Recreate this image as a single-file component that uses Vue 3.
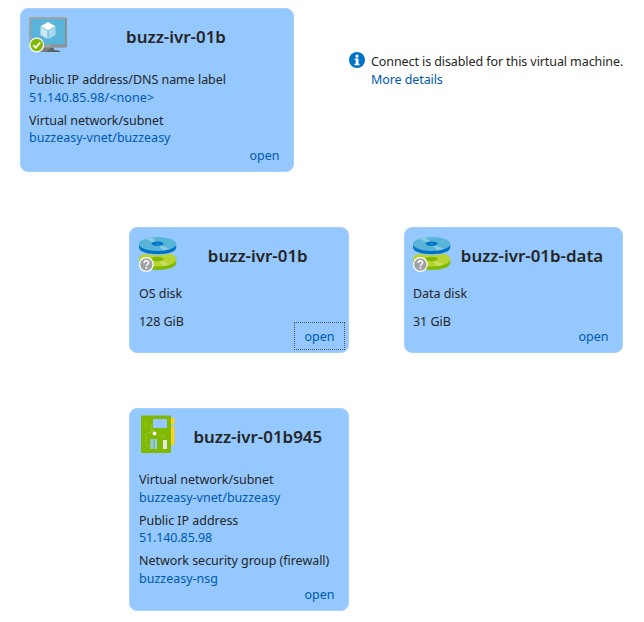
<script setup>
const cards = [
  {
    id: 'vm', icon: 'vm', title: 'buzz-ivr-01b',
    fields: [
      { label: 'Public IP address/DNS name label', value: '51.140.85.98/<none>', wide: true },
      { label: 'Virtual network/subnet', value: 'buzzeasy-vnet/buzzeasy' },
    ],
  },
  { id: 'os', icon: 'disk', title: 'buzz-ivr-01b', fields: [{ label: 'OS disk' }, { label: '128 GiB' }], focused: true },
  { id: 'data', icon: 'disk', title: 'buzz-ivr-01b-data', fields: [{ label: 'Data disk' }, { label: '31 GiB' }] },
  {
    id: 'nic', icon: 'nic', title: 'buzz-ivr-01b945',
    fields: [
      { label: 'Virtual network/subnet', value: 'buzzeasy-vnet/buzzeasy' },
      { label: 'Public IP address', value: '51.140.85.98', narrow: true },
      { label: 'Network security group (firewall)', value: 'buzzeasy-nsg' },
    ],
  },
]
</script>

<template>
  <main class="map">
    <template v-for="c in cards" :key="c.id">
      <section class="card" :class="[c.id, c.icon + '-card']">
        <header>
          <svg v-if="c.icon === 'vm'" class="icon" viewBox="0 0 38 38">
            <path d="M14 30h10l1 4 6 1v1H8v-1l5-1z" fill="#7a7a7a" />
            <path d="M24 31l1 3 6 1v1H17z" fill="#5d6063" />
            <rect width="38" height="30.500" y="1" rx="1.500" fill="#a0a1a2" />
            <path d="M38 2v28a1.500 1.500 0 0 1-1.500 1.500H20L36 3z" fill="#8f9193" />
            <rect x="2" y="3" width="34" height="25.500" fill="#59b4d9" />
            <path d="M19 6l7.500 4.200-7.500 4.200-7.500-4.200z" fill="#fff" />
            <path d="M11.500 11v8l7 4v-8z" fill="#cde8f3" />
            <path d="M26.500 11v8l-7 4v-8z" fill="#a9d8ec" />
            <circle cx="7.700" cy="29" r="7.500" fill="#fff" />
            <circle cx="7.700" cy="29" r="6.200" fill="#7fba00" />
            <path d="M4.300 29.200l2.500 2.500 4.400-5.200" fill="none" stroke="#fff" stroke-width="1.900" />
          </svg>
          <svg v-else-if="c.icon === 'disk'" class="icon" viewBox="0 0 38 38">
            <path d="M0 22v4c0 4 8 7 18.700 7s18.500-3 18.500-7v-4z" fill="#7fba00" />
            <ellipse cx="18.600" cy="22" rx="18.600" ry="7.600" fill="#b8d432" />
            <path d="M18.600 22l5.400 7.200 7-1.700z" fill="#d6e685" opacity=".6" />
            <ellipse cx="18.600" cy="22" rx="6" ry="2.300" fill="#7fba00" />
            <path d="M0 8v3.500c0 4 8 6.700 18.700 6.700s18.500-2.700 18.500-6.700V8z" fill="#94c8fe" />
            <path d="M0 7v3.500c0 4 8 6.700 18.700 6.700s18.500-2.700 18.500-6.700V7z" fill="#0072c6" />
            <ellipse cx="18.600" cy="7" rx="18.600" ry="6.900" fill="#59b4d9" />
            <path d="M18.600 7L6 2l7-1.600zM18.600 7l5.400 6.600 7-1.600z" fill="#a7d7ed" opacity=".65" />
            <ellipse cx="18.600" cy="6.800" rx="6" ry="2.200" fill="#0072c6" />
            <ellipse cx="18.600" cy="7" rx="2" ry=".7" fill="#3999d0" />
            <circle cx="7.300" cy="27.500" r="7.500" fill="#fff" />
            <circle cx="7.300" cy="27.500" r="6.200" fill="#a0a1a2" />
            <path d="M5.100 26c0-3 4.600-2.900 4.500-.3-.1 1.500-2.200 1.600-2.200 3.400" fill="none" stroke="#fff" stroke-width="1.500" />
            <rect x="6.600" y="30" width="1.600" height="1.600" fill="#fff" />
          </svg>
          <svg v-else class="icon" viewBox="0 0 38 38">
            <path d="M31 3h4.500v6.500H31zM31 11.500h4.500V30H31z" fill="#fcd116" />
            <rect x="2" y=".500" width="30" height="37.500" fill="#7fba00" />
            <path d="M12 9v9H7v13h4M7 7v7M14 13v4M20 20h5v4" fill="none" stroke="#99c733" />
            <rect x="14" y="4" width="14" height="9" fill="#94c8fe" />
            <circle cx="15.500" cy="18.500" r="1.900" fill="#fff" />
            <path d="M11.500 24h3v10h-3zM15.500 24h2.500v10h-2.500z" fill="#94c8fe" />
            <rect x="24" y="25" width="4" height="9" fill="#e6e6e6" />
          </svg>
          <h2>{{ c.title }}</h2>
        </header>
        <div class="body">
          <div class="fields">
            <div v-for="f in c.fields" :key="f.label" class="field">
              <div class="line label">{{ f.label }}</div>
              <div v-if="f.value" class="line value"><a :class="{ wide: f.wide, narrow: f.narrow }">{{ f.value }}</a></div>
            </div>
          </div>
          <a class="open" :class="{ focused: c.focused }">open</a>
        </div>
      </section>
      <aside v-if="c.id === 'vm'" class="notice">
        <svg class="info" viewBox="0 0 16 16">
          <circle cx="8" cy="8" r="8" fill="#0072c6" />
          <circle cx="8" cy="4.100" r="1.600" fill="#fff" />
          <path d="M5.700 6.600h3.800v5.200h1V13.200H5.500v-1.400h1.200V8h-1z" fill="#fff" />
        </svg>
        <div class="message">
          <div class="line">Connect is disabled for this virtual machine.</div>
          <div class="line"><a>More details</a></div>
        </div>
      </aside>
    </template>
  </main>
</template>

<style>
body {
  background: #fff;
}
</style>

<style scoped>
.map {
  box-sizing: border-box;
  width: 644px;
  height: 622px;
  padding: 8px 0 0 20px;
  display: grid;
  grid-template-columns: 109px 165px 55px 55px 219px;
  grid-template-rows: 164px 126px 203px;
  row-gap: 55px;
  font: 12.5px/18px "Noto Sans", "Open Sans", sans-serif;
  color: #252525;
}
.card {
  box-sizing: border-box;
  display: flex;
  flex-direction: column;
  background: #94c8fe;
  border: 1px solid #a5d0fc;
  border-radius: 8px;
}
.vm { grid-area: 1 / 1 / 2 / 3; }
.os { grid-area: 2 / 2 / 3 / 4; width: 220px; }
.data { grid-area: 2 / 5; }
.nic { grid-area: 3 / 2 / 4 / 4; width: 220px; }
header {
  display: flex;
  flex: none;
  height: 62px;
  padding: 0 8px;
}
.os header, .nic header { padding: 0 8px 0 9px; }
.disk-card header { height: 57px; }
.icon {
  flex: none;
  width: 38px;
  height: 38px;
  margin-top: 7px;
}
.disk-card .icon { margin-top: 9px; }
.nic-card .icon { margin-top: 6px; }
h2 {
  flex: 1;
  margin: 16px -9.500px 0 -10.500px;
  font: 600 16.9px/24px "Noto Sans", "Open Sans", sans-serif;
  text-align: center;
  white-space: nowrap;
}
.vm h2 { margin: 16px -10px 0; }
.os h2, .nic h2 { margin: 16px -9.500px 0 -11px; }
.body {
  flex: 1;
  min-height: 0;
  display: grid;
}
.fields, .open { grid-area: 1 / 1; }
.fields {
  display: flex;
  flex-direction: column;
  gap: 4.500px;
  padding-left: 8px;
}
.os .fields, .nic .fields { padding-left: 9px; }
.disk-card .fields { gap: 10px; }
.field {
  display: flex;
  flex-direction: column;
}
.line { white-space: nowrap; }
.label { letter-spacing: -0.045px; }
.value { margin: -0.250px 0 0.250px; }
.message { padding-top: 1px; letter-spacing: -0.09px; }
a { color: #0058ad; }
.wide { letter-spacing: 0.09px; }
.narrow { letter-spacing: -0.12px; }
.open {
  box-sizing: border-box;
  align-self: end;
  justify-self: end;
  width: 51px;
  height: 28px;
  margin: 0 3px 2px 0;
  padding-top: 1px;
  border: 1px dotted transparent;
  line-height: 26px;
  text-align: center;
}
.open.focused { border-color: #555; }
.notice {
  grid-area: 1 / 4 / 2 / 6;
  display: flex;
  gap: 6px;
  margin-top: 44px;
}
.info {
  flex: none;
  width: 16px;
  height: 16px;
}
</style>
